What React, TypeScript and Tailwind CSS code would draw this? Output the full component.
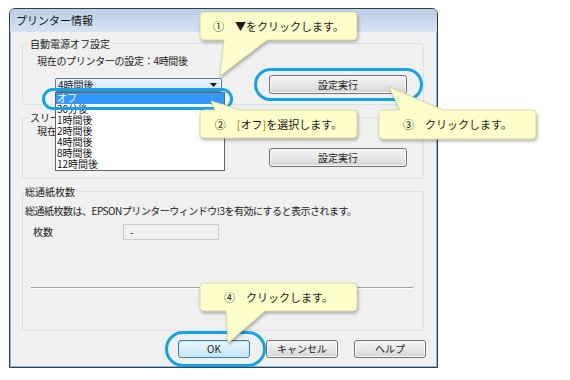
import React from 'react'

const ITEMS = ['オフ', '30分後', '1時間後', '2時間後', '4時間後', '8時間後', '12時間後']

const btnCls =
  'flex h-[19px] items-center justify-center rounded-[3px] border border-[#707070] bg-linear-to-b from-[#f4f4f4] via-[#e8e8e8] to-[#d3d3d3] text-[10px] leading-none text-[#1a1a1a] shadow-[inset_0_0_0_1px_#fbfbfb]'

function ComboBox({ value, open }: { value: string; open?: boolean }) {
  return (
    <div className="relative w-[167px]">
      <div className="flex h-[14px] items-center justify-between rounded-[2px] border border-[#5b7894] bg-linear-to-b from-[#eef6fd] to-[#cfe3f5] pl-[2px] pr-[4px] text-[10px] leading-none">
        <span>{value}</span>
        <svg width="7" height="4" viewBox="0 0 7 4">
          <path d="M0 0h7L3.5 4z" fill="#111" />
        </svg>
      </div>
      {open && (
        <div className="absolute left-0 top-full z-10 w-[170px] border border-[#646464] bg-white">
          {ITEMS.map((t, i) => (
            <div
              key={t}
              className={
                i === 0
                  ? 'flex h-[11px] items-center bg-[#3399ff] pl-[1px] text-[10px] leading-none text-white'
                  : 'flex h-[11px] items-center pl-[1px] text-[10px] leading-none text-[#111]'
              }
            >
              {t}
            </div>
          ))}
        </div>
      )}
    </div>
  )
}

function Group({
  label,
  className,
  legendCls,
  children,
}: {
  label: string
  className: string
  legendCls: string
  children: React.ReactNode
}) {
  return (
    <fieldset className={`rounded-[3px] border border-[#d9e2e8] ${className}`}>
      <legend className={`px-[1px] text-[10px] leading-[11px] ${legendCls}`}>{label}</legend>
      {children}
    </fieldset>
  )
}

// speech bubble: box + tail, drawn as one shape, text stays html
function Bubble({
  className,
  w,
  h,
  side,
  a,
  b,
  tip,
  children,
}: {
  className: string
  w: number
  h: number
  side: 'top' | 'bottom'
  a: number
  b: number
  tip: [number, number]
  children: React.ReactNode
}) {
  const r = 4
  const d =
    side === 'bottom'
      ? `M${r},0 H${w - r} Q${w},0 ${w},${r} V${h - r} Q${w},${h} ${w - r},${h} H${b} L${tip[0]},${tip[1]} L${a},${h} H${r} Q0,${h} 0,${h - r} V${r} Q0,0 ${r},0 Z`
      : `M${r},0 H${a} L${tip[0]},${tip[1]} L${b},0 H${w - r} Q${w},0 ${w},${r} V${h - r} Q${w},${h} ${w - r},${h} H${r} Q0,${h} 0,${h - r} V${r} Q0,0 ${r},0 Z`
  return (
    <div className={`absolute z-30 flex items-center justify-center ${className}`}>
      <svg
        className="absolute left-0 top-0 overflow-visible drop-shadow-[1px_2px_1.5px_rgba(0,0,0,0.28)]"
        width={w}
        height={h}
      >
        <path d={d} fill="#ffffcc" stroke="#dcdaa8" strokeWidth="1" />
      </svg>
      <span className="relative text-[11px] leading-none text-[#1a1a1a]">{children}</span>
    </div>
  )
}

export default function App() {
  return (
    <div className="relative h-[380px] w-[570px] overflow-hidden bg-white pl-[9px] pt-[8px] font-['Noto_Sans_CJK_JP',sans-serif] text-[#1a1a1a]">
      {/* dialog window */}
      <div className="flex h-[360px] w-[429px] flex-col overflow-hidden rounded-t-[6px] border border-[#2f3f52]">
        <div className="flex h-[23px] shrink-0 items-center bg-linear-to-b from-[#bccfe6] to-[#d6e2f0] pl-[6px] text-[11px] leading-none text-[#111]">
          プリンター情報
        </div>
        <div className="flex flex-1 flex-col border-x border-b border-[#8cb4da] bg-[#f0f0f0] pl-[11px] pr-[12px] pt-[6px]">
          <Group label="自動電源オフ設定" className="h-[67px]" legendCls="ml-[6px]">
            <div className="ml-[14px] mt-[6px] text-[10px] leading-[11px] tracking-[-0.3px]">現在のプリンターの設定：4時間後</div>
            <div className="mt-[9px] flex h-[19px] items-center">
              <div className="ml-[32px]">
                <ComboBox value="4時間後" open />
              </div>
              <button className={`${btnCls} ml-[47px] w-[138px]`}>設定実行</button>
            </div>
          </Group>

          <Group label="スリープタイマー設定" className="mt-[7px] h-[67px]" legendCls="ml-[6px]">
            <div className="ml-[14px] mt-[2px] text-[10px] leading-[11px]">現在</div>
            <div className="mt-[12px] flex h-[19px] items-center">
              <div className="ml-[32px]">
                <ComboBox value="" />
              </div>
              <button className={`${btnCls} ml-[47px] w-[138px]`}>設定実行</button>
            </div>
          </Group>

          <Group label="総通紙枚数" className="mt-[7px] h-[145px]" legendCls="ml-[1px]">
            <div className="ml-[2px] mt-[8px] text-[10px] leading-[11px] tracking-[-0.5px]">
              総通紙枚数は、EPSONプリンターウィンドウ!3を有効にすると表示されます。
            </div>
            <div className="mt-[8px] flex h-[16px] items-center">
              <span className="ml-[10px] w-[90px] text-[10px] leading-none">枚数</span>
              <div className="flex h-[16px] w-[96px] items-center border border-[#c9ccd1] bg-[#f0f0f0] pl-[6px] text-[10px] leading-none">
                -
              </div>
            </div>
            <div className="ml-[8px] mr-[10px] mt-[47px] border-t border-[#a0a0a0] border-b border-b-white" />
          </Group>

          <div className="-mr-[2px] mt-[9px] flex justify-end gap-[16px]">
            <button className="flex h-[18px] w-[72px] items-center justify-center rounded-[3px] border border-[#3c7fb1] bg-linear-to-b from-[#eaf6fd] via-[#d9effc] to-[#bee6fd] text-[10px] leading-none text-[#1a1a1a] shadow-[inset_0_0_0_1px_#c8ecfd]">
              OK
            </button>
            <button className={`${btnCls} !h-[18px] w-[72px]`}>キャンセル</button>
            <button className={`${btnCls} !h-[18px] w-[72px]`}>ヘルプ</button>
          </div>
        </div>
      </div>

      {/* highlight rings */}
      <div className="absolute left-[42px] top-[88px] z-20 h-[22px] w-[191px] rounded-full border-[3px] border-[#13a3e2]" />
      <div className="absolute left-[254px] top-[68px] z-20 h-[33px] w-[169px] rounded-full border-[3px] border-[#13a3e2]" />
      <div className="absolute left-[165px] top-[331px] z-20 h-[36px] w-[101px] rounded-full border-[3px] border-[#13a3e2]" />

      {/* callouts */}
      <Bubble className="left-[200px] top-[12px] h-[28px] w-[157px]" w={157} h={28} side="bottom" a={24} b={67} tip={[20, 64]}>
        ①　▼をクリックします。
      </Bubble>
      <Bubble className="left-[200px] top-[110px] h-[28px] w-[157px]" w={157} h={28} side="top" a={15} b={40} tip={[11, -9]}>
        ②　<span className="text-[#b8700a]">[</span>オフ<span className="text-[#b8700a]">]</span>を選択します。
      </Bubble>
      <Bubble className="left-[379px] top-[110px] h-[29px] w-[157px]" w={157} h={29} side="top" a={21} b={64} tip={[10, -23]}>
        ③　クリックします。
      </Bubble>
      <Bubble className="left-[200px] top-[283px] h-[28px] w-[157px]" w={157} h={28} side="bottom" a={26} b={65} tip={[28, 60]}>
        ④　クリックします。
      </Bubble>
    </div>
  )
}
